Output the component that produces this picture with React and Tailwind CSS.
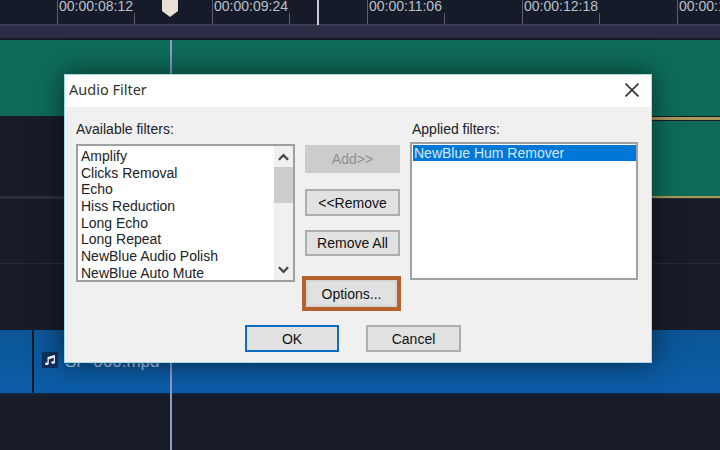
import React from "react";
import { FaMusic } from "react-icons/fa";

const available = [
  "Amplify",
  "Clicks Removal",
  "Echo",
  "Hiss Reduction",
  "Long Echo",
  "Long Repeat",
  "NewBlue Audio Polish",
  "NewBlue Auto Mute",
];
const rulerLabels = ["00:00:08:12", "00:00:09:24", "00:00:11:06", "00:00:12:18", "00:00:14:00"];

function RulerCell({ label }) {
  return (
    <div className="flex h-6 w-[155px] shrink-0">
      <div className="w-[77px] border-l border-[#5a5e70] pl-px text-[14px] leading-[13px] whitespace-nowrap text-[#bcc0ca]">
        {label}
      </div>
      <div className="mt-[13px] w-[78px] border-l border-[#5a5e70]" />
    </div>
  );
}

function Button({ children, className = "" }) {
  return (
    <div className={`flex items-center justify-center border-2 bg-[#e1e1e1] pt-px text-[#111] ${className}`}>
      {children}
    </div>
  );
}

function Chevron({ up }) {
  return (
    <svg viewBox="0 0 12 8" width="11" height="8" fill="none" stroke="#444" strokeWidth="2.4">
      <path d={up ? "M1 7l5-5 5 5" : "M1 1l5 5 5-5"} />
    </svg>
  );
}

function AudioFilterDialog() {
  return (
    <div className="absolute left-[64px] top-[74px] h-[289px] w-[588px] border border-[#a6dbe6] bg-[#f0f0f0] text-[14px] leading-[17px] text-[#222] shadow-[0_0_26px_rgba(0,0,0,0.55)]">
      <div className="flex h-[32px] items-center justify-between bg-white pb-[3px] pl-1 pr-[12px] text-[#333]">
        <span className="text-[14.5px]" style={{ fontFamily: '"Noto Sans", sans-serif' }}>Audio Filter</span>
        <svg viewBox="0 0 14 14" width="14" height="14" fill="none" stroke="#333" strokeWidth="1.6">
          <path d="M0.5 0.5l13 13M13.5 0.5l-13 13" />
        </svg>
      </div>

      <div className="flex h-[218px] pl-[11px] pt-[14px]">
        <div className="w-[219px]">
          <div className="h-[16px]">Available filters:</div>
          <div className="mt-[7px] flex h-[138px] border-2 border-[#a0a0a0] bg-white">
            <div className="flex-1 pl-[3px] pt-[2px]">
              {available.map((name) => (
                <div key={name} className="h-[16.7px] whitespace-nowrap text-[#222]">
                  {name}
                </div>
              ))}
            </div>
            <div className="flex w-[19px] flex-col items-center bg-[#f0f0f0]">
              <div className="flex h-[21px] items-center justify-center">
                <Chevron up />
              </div>
              <div className="h-[36px] w-full bg-[#cdcdcd]" />
              <div className="mt-auto flex h-[21px] items-center justify-center">
                <Chevron />
              </div>
            </div>
          </div>
        </div>

        <div className="ml-[10px] w-[95px] pt-[24px]">
          <div className="flex h-[28px] items-center justify-center bg-[#cccccc] text-[#8f8f8f]">Add&gt;&gt;</div>
          <Button className="mt-[16px] h-[27px] border-[#adadad]">&lt;&lt;Remove</Button>
          <Button className="mt-[14px] h-[26px] border-[#adadad]">Remove All</Button>
          <div className="-ml-[3px] mt-[20px] h-[35px] w-[99px] border-[4px] border-[#b5622a]">
            <Button className="h-full border-[#d5d5d5]">Options...</Button>
          </div>
        </div>

        <div className="ml-[10px] w-[228px]">
          <div className="h-[16px] pl-[2px]">Applied filters:</div>
          <div className="mt-[5px] h-[138px] border-2 border-[#a0a0a0] bg-white p-px">
            <div className="h-[16px] w-[223px] whitespace-nowrap bg-[#0078d7] pl-px leading-[16px] text-[#d6e9fb]">
              NewBlue Hum Remover
            </div>
          </div>
        </div>
      </div>

      <div className="flex pl-[180px]">
        <Button className="h-[27px] w-[94px] border-[#0a6cc4]">OK</Button>
        <Button className="ml-[27px] h-[27px] w-[95px] border-[#adadad]">Cancel</Button>
      </div>
    </div>
  );
}

export default function App() {
  return (
    <div
      className="relative h-[450px] w-[720px] overflow-hidden bg-[#171c28]"
      style={{ fontFamily: '"Liberation Sans", sans-serif' }}
    >
      {/* ruler */}
      <div className="flex h-6 bg-[#161b2a] pl-[57px]">
        {rulerLabels.map((label) => (
          <RulerCell key={label} label={label} />
        ))}
      </div>
      <div className="h-[2px] bg-[#3a3e55]" />
      <div className="h-[12px] bg-[#2a2d45]" />
      <div className="h-[2px] bg-[#141924]" />

      {/* tracks */}
      <div className="h-[76px] bg-[#0e6b59]" />
      <div className="h-[4px] bg-[#171c28]">
        <div className="ml-[400px] mt-[1px] h-[3px] bg-[#a99a5a]" />
      </div>
      <div className="flex h-[75px]">
        <div className="w-[400px]" />
        <div className="flex-1 bg-[#0e6b59]" />
      </div>
      <div className="h-[3px] bg-[#2a2f3a]">
        <div className="ml-[400px] h-[2px] bg-[#a99a5a]" />
      </div>
      <div className="h-[65px] border-b border-[#272c38]" />
      <div className="h-[66px]" />

      <div className="flex h-[63px] bg-gradient-to-b from-[#0c5596] to-[#0b5ca8]">
        <div className="w-[32px]" />
        <div className="w-[2px] bg-[#141a28]" />
        <div className="flex items-start gap-[7px] pl-[8px] pt-[22px] text-[17px] leading-[20px] text-[#a9c8e6]">
          <div className="flex h-[16px] w-[16px] items-center justify-center bg-[#10305c]">
            <FaMusic className="text-[10px] text-white" />
          </div>
          <span className="whitespace-nowrap">SP-060.mpd</span>
        </div>
      </div>
      <div className="h-[2px] bg-[#10263f]" />

      {/* playhead and scrub marks */}
      <div className="absolute left-[170px] top-[40px] h-[410px] w-[2px] bg-[#8e9ccb]" />
      <svg className="absolute left-[162px] top-0" width="16" height="17" viewBox="0 0 16 17">
        <path d="M0 0h16v11l-8 6-8-6z" fill="#e8e0d2" />
      </svg>
      <div className="absolute left-[317px] top-0 h-[25px] w-[2px] bg-[#c9ccd4]" />

      <AudioFilterDialog />
    </div>
  );
}
